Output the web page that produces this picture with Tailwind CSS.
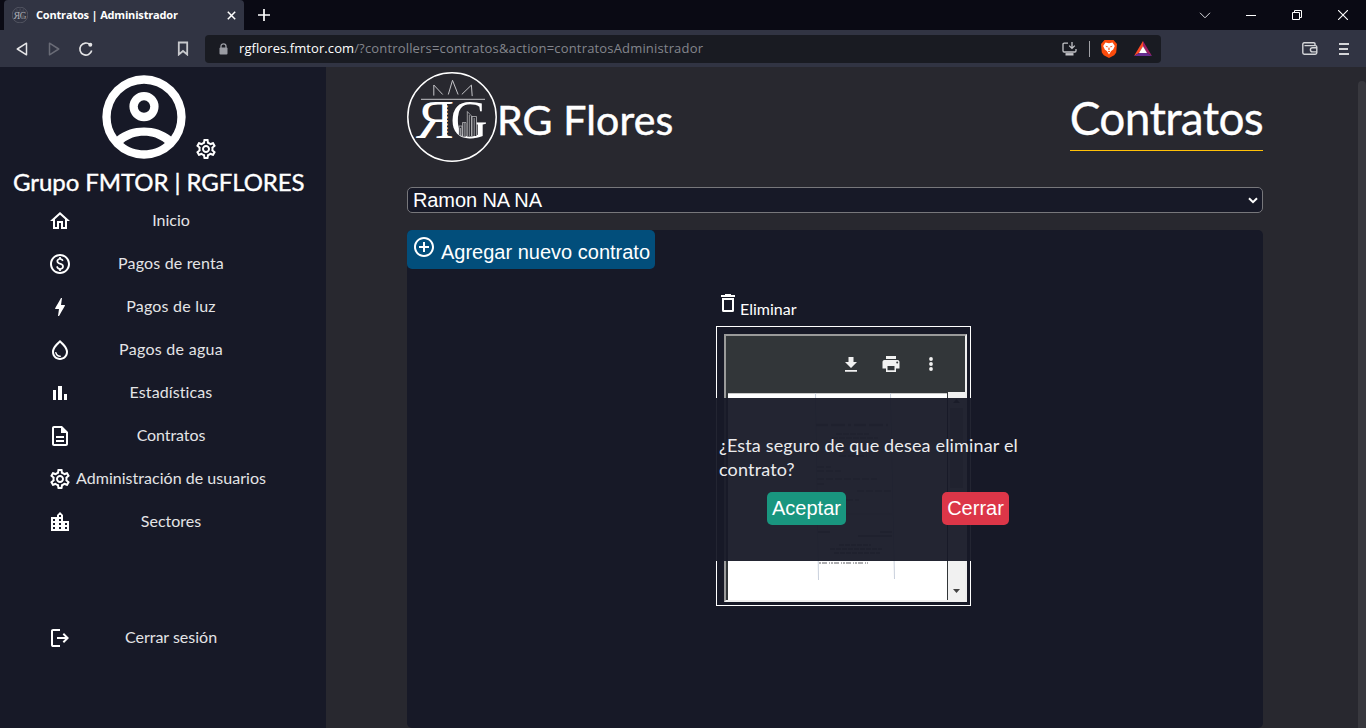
<!DOCTYPE html>
<html lang="es">
<head>
<meta charset="utf-8">
<title>Contratos | Administrador</title>
<script src="https://cdn.jsdelivr.net/npm/@tailwindcss/browser@4"></script>
</head>
<body class="h-[728px] w-[1366px] overflow-hidden bg-[#28282f] font-['Lato',sans-serif] text-white">
<svg class="hidden">
  <symbol id="cog" viewBox="0 0 24 24"><path d="M19.43 12.98c.04-.32.07-.64.07-.98 0-.34-.03-.66-.07-.98l2.11-1.65c.19-.15.24-.42.12-.64l-2-3.46c-.09-.16-.26-.25-.44-.25-.06 0-.12.01-.17.03l-2.49 1c-.52-.4-1.08-.73-1.69-.98l-.38-2.65C14.46 2.18 14.25 2 14 2h-4c-.25 0-.46.18-.49.42l-.38 2.65c-.61.25-1.17.59-1.69.98l-2.49-1c-.06-.02-.12-.03-.18-.03-.17 0-.34.09-.43.25l-2 3.46c-.13.22-.07.49.12.64l2.11 1.65c-.04.32-.07.65-.07.98 0 .33.03.66.07.98l-2.11 1.65c-.19.15-.24.42-.12.64l2 3.46c.09.16.26.25.44.25.06 0 .12-.01.17-.03l2.49-1c.52.4 1.08.73 1.69.98l.38 2.65c.03.24.24.42.49.42h4c.25 0 .46-.18.49-.42l.38-2.65c.61-.25 1.17-.59 1.69-.98l2.49 1c.06.02.12.03.18.03.17 0 .34-.09.43-.25l2-3.46c.12-.22.07-.49-.12-.64l-2.11-1.65zm-1.98-1.71c.04.31.05.52.05.73 0 .21-.02.43-.05.73l-.14 1.13.89.7 1.08.84-.7 1.21-1.27-.51-1.04-.42-.9.68c-.43.32-.84.56-1.25.73l-1.06.43-.16 1.13-.2 1.35h-1.4l-.19-1.35-.16-1.13-1.06-.43c-.43-.18-.83-.41-1.23-.71l-.91-.7-1.06.43-1.27.51-.7-1.21 1.08-.84.89-.7-.14-1.13c-.03-.31-.05-.54-.05-.74s.02-.43.05-.73l.14-1.13-.89-.7-1.08-.84.7-1.21 1.27.51 1.04.42.9-.68c.43-.32.84-.56 1.25-.73l1.06-.43.16-1.13.2-1.35h1.39l.19 1.35.16 1.13 1.06.43c.43.18.83.41 1.23.71l.91.7 1.06-.43 1.27-.51.7 1.21-1.07.85-.89.7.14 1.13zM12 8c-2.21 0-4 1.79-4 4s1.79 4 4 4 4-1.79 4-4-1.79-4-4-4zm0 6c-1.1 0-2-.9-2-2s.9-2 2-2 2 .9 2 2-.9 2-2 2z"/></symbol>
  <symbol id="logo" viewBox="0 0 90 90">
    <circle cx="45" cy="45" r="44.2" fill="none" stroke="#fff" stroke-width="1.5"/>
    <g fill="none" stroke="#c4c4c8" stroke-width="1">
      <path d="M26.800 23.600V13l8.900 9.500M41.300 22.500l4.200-14.200 5.600 14.200M54.800 22.400l9.600-9.300.8 11"/>
      <path d="M14 27.300h64"/>
    </g>
    <g font-family="Liberation Serif, serif" font-size="55" fill="#fff">
      <text transform="matrix(-1 0 0 1 47 65.8)" textLength="38" lengthAdjust="spacingAndGlyphs">R</text>
      <text x="43.500" y="65.800" textLength="37" lengthAdjust="spacingAndGlyphs">G</text>
    </g>
    <path d="M41 32v32" stroke="#28282f" stroke-width="2" stroke-dasharray="1.600 2"/>
    <g fill="#28282f" stroke="#c8c8cc" stroke-width=".7">
      <path d="M52 63V54h3v10M55.500 64.500V50.500H59v14M60.300 64.500V39.500l4.200 4.500v20M65 64V44.500h4.500V64"/>
      <path d="M57.200 51v13M62.300 43v21M53.500 56v8M67.200 46v18"/>
    </g>
  </symbol>
</svg>

<!-- Browser chrome -->
<header class="h-[67px] bg-[#313443] font-['Open_Sans',sans-serif]">
  <div class="flex h-[30px] items-center bg-[#0a0a14] pl-1">
    <div class="flex h-full w-60 items-center rounded-t-sm bg-[#313443] pl-2">
      <svg class="size-4 opacity-60"><use href="#logo"/></svg>
      <span class="ml-2 w-[191px] whitespace-nowrap text-[11px] font-bold tracking-[-0.18px]">Contratos | Administrador</span>
      <svg class="size-[9px]" viewBox="0 0 9 9" stroke="#fff" stroke-width="1.5"><path d="M.8.800l7.400 7.400M8.200.800L.8 8.200"/></svg>
    </div>
    <svg class="ml-[14px] size-3" viewBox="0 0 12 12" stroke="#fff" stroke-width="1.700"><path d="M6 0v12M0 6h12"/></svg>
    <div class="ml-auto flex items-center pr-[18px]">
      <svg class="h-[7px] w-3" viewBox="0 0 12 7" fill="none" stroke="#d8d8dc" stroke-width="1"><path d="M1 .800l5 5 5-5"/></svg>
      <svg class="ml-[35px] h-px w-[10px]"><path d="M0 .5h10" stroke="#fff"/></svg>
      <svg class="ml-9 size-[10px]" viewBox="0 0 10 10" fill="none" stroke="#fff"><path d="M.5 2.500h7v7h-7zM2.500 2.500v-2h7v7h-2"/></svg>
      <svg class="ml-9 size-[10px]" viewBox="0 0 10 10" stroke="#fff" stroke-width="1.100"><path d="M0 0l10 10M10 0L0 10"/></svg>
    </div>
  </div>
  <div class="flex h-[37px] items-center">
    <svg class="ml-4 h-[14px] w-3" viewBox="0 0 12 14" fill="none" stroke="#e4e4e6" stroke-width="1.500" stroke-linejoin="round"><path d="M10.500 1.200L1.300 7l9.200 5.800z"/></svg>
    <svg class="ml-5 h-[14px] w-3" viewBox="0 0 12 14" fill="none" stroke="#696b76" stroke-width="1.500" stroke-linejoin="round"><path d="M1.500 1.200L10.700 7l-9.200 5.800z"/></svg>
    <svg class="ml-[18px] size-4" viewBox="0 0 16 16" fill="none" stroke="#e4e4e6" stroke-width="1.600"><path d="M13.700 9.500A6 6 0 1 1 12 3.700"/><circle cx="12.300" cy="3.800" r="2" fill="#e4e4e6" stroke="none"/></svg>
    <svg class="ml-[83px] h-[15px] w-3" viewBox="0 0 12 15" fill="none" stroke="#c8c9cd" stroke-width="1.800"><path d="M1.800 1.500h8.400v12L6 10l-4.200 3.500z"/></svg>
    <div class="ml-4 flex h-7 w-[956px] items-center rounded bg-[#191b22]">
      <svg class="ml-[14px] h-3 w-[9px]" viewBox="0 0 9 12"><path d="M2 5V3.300a2.500 2.500 0 0 1 5 0V5" fill="none" stroke="#9a9ca3" stroke-width="1.300"/><rect x=".5" y="4.500" width="8" height="7" rx="1" fill="#9a9ca3"/></svg>
      <p class="ml-[11px] whitespace-nowrap text-[13px] tracking-[0.08px]">rgflores.fmtor.com<span class="tracking-[0.17px] text-[#84868d]">/?controllers=contratos&amp;action=contratosAdministrador</span></p>
      <svg class="ml-auto h-[14px] w-[15px]" viewBox="0 0 15 14" fill="none" stroke="#c4c5c9" stroke-width="1.300"><path d="M6 1.200H2.200Q1 1.200 1 2.400v6.400Q1 10 2.200 10h10.600q1.200 0 1.200-1.200V7M10 0v6M7.200 3.600L10 6.400l2.800-2.800"/><path d="M3.500 12.300h8" stroke-width="2.400"/></svg>
      <i class="ml-3 h-4 w-px bg-[#a0a1a6]"></i>
      <svg class="ml-[11px] h-[18px] w-4" viewBox="0 0 16 18"><path d="M3.500 0h9l1.500 1.800L16 4l-.8 8.500-2 2.700L8 18l-5.200-2.800-2-2.700L0 4l2-2.200z" fill="#fa4b0c"/><path d="M4.500 2.600L8 3.200l3.500-.6L13.800 6l-1.600 3.600-2 1.400L8 14.500 5.800 11l-2-1.400L2.200 6z" fill="#fff"/><path d="M4.200 5.700l2.600.6-.6 1.300zM11.800 5.700l-2.600.6.6 1.300zM7.600 7.500h.8l.4 2L8 10l-.8-.5zM6.700 11.300L8 10.700l1.300.6L8 12.300z" fill="#fa4b0c"/></svg>
      <svg class="ml-[17px] h-[15px] w-[18px]" viewBox="0 0 18 15"><path d="M9 0v5.500L5 12l-5 3z" fill="#ff4a24"/><path d="M9 0l9 15-5-3-4-6.500z" fill="#9e1f63"/><path d="M0 15l5-3h8l5 3z" fill="#662d91"/><path d="M9 5.200l4 6.900H5z" fill="#fff"/></svg>
      <i class="w-[9px]"></i>
    </div>
    <svg class="ml-[141px] h-[13px] w-4" viewBox="0 0 16 13" fill="none" stroke="#d4d5d8" stroke-width="1.400"><path d="M13 3.500V2Q13 .8 11.800.8H2.200Q.8.800.8 2.200v8.600Q.8 12.200 2.200 12.200h11q1.600 0 1.600-1.400V5Q14.800 3.600 13.400 3.600H2.500M15 5.700h-4.500a2.100 2.100 0 0 0 0 4.200H15"/></svg>
    <svg class="ml-[21px] h-3 w-[10px]" viewBox="0 0 10 12" stroke="#d4d5d8" stroke-width="2"><path d="M0 1h10M0 6h9M0 11h10"/></svg>
  </div>
</header>

<div class="flex h-[661px]">
  <!-- Sidebar -->
  <aside class="w-[326px] shrink-0 bg-[#171927]">
    <div class="flex h-[100px] items-end pl-[94px]">
      <svg class="size-[100px]" viewBox="0 0 24 24" fill="#fff"><path fill-rule="evenodd" d="M12 2a10 10 0 1 0 0 20 10 10 0 0 0 0-20zM7 18.250C8.300 17.100 10.100 16.500 12 16.500s3.700.6 5 1.750C15.600 19.400 13.900 20 12 20s-3.600-.6-5-1.750zM18.500 16.650C16.800 15.300 14.500 14.500 12 14.500s-4.800.8-6.500 2.150C4.500 15.300 4 13.800 4 12a8 8 0 0 1 16 0c0 1.800-.5 3.300-1.500 4.650z"/><circle cx="12" cy="9.500" r="2.500" fill="none" stroke="#fff" stroke-width="2"/></svg>
      <svg class="mb-[6px] size-6 fill-white"><use href="#cog"/></svg>
    </div>
    <h2 class="h-8 whitespace-nowrap pl-[13px] text-2xl leading-[30px] tracking-[-0.07px] [-webkit-text-stroke:0.4px_white]">Grupo FMTOR | RGFLORES</h2>
    <nav class="text-base text-[#e4e4e6]">
      <a class="flex h-[43px] items-center gap-1 pl-12"><svg class="size-6 fill-white" viewBox="0 0 24 24"><path d="M12 5.690l5 4.500V18h-2v-6H9v6H7v-7.810l5-4.500M12 3L2 12h3v8h6v-6h2v6h6v-8h3L12 3z"/></svg><span class="w-[190px] pb-[2px] text-center">Inicio</span></a>
      <a class="flex h-[43px] items-center gap-1 pl-12"><svg class="size-6 fill-white" viewBox="0 0 24 24"><path d="M12 2C6.480 2 2 6.480 2 12s4.480 10 10 10 10-4.480 10-10S17.520 2 12 2zm0 18c-4.410 0-8-3.590-8-8s3.590-8 8-8 8 3.590 8 8-3.590 8-8 8zm.89-8.900c-1.780-.59-2.640-.96-2.640-1.900 0-1.020 1.110-1.390 1.810-1.390 1.310 0 1.790.99 1.900 1.340l1.580-.67c-.15-.44-.82-1.910-2.660-2.230V5h-1.750v1.260c-2.600.56-2.620 2.850-2.620 2.960 0 2.270 2.250 2.910 3.350 3.310 1.580.56 2.280 1.070 2.280 2.030 0 1.130-1.050 1.610-1.980 1.610-1.820 0-2.340-1.870-2.400-2.090l-1.660.67c.63 2.190 2.280 2.780 3.020 2.960V19h1.750v-1.240c.52-.09 3.020-.59 3.020-3.220.01-1.390-.6-2.610-3-3.440z"/></svg><span class="w-[190px] pb-[2px] text-center tracking-[0.17px]">Pagos de renta</span></a>
      <a class="flex h-[43px] items-center gap-1 pl-12"><svg class="size-6 fill-white" viewBox="0 0 24 24"><path d="M11 21h-1l1-7H7.500c-.58 0-.57-.32-.38-.66.19-.34.05-.08.07-.12C8.480 10.940 10.420 7.540 13 3h1l-1 7h3.500c.49 0 .56.33.47.51l-.07.15C12.960 17.550 11 21 11 21z"/></svg><span class="w-[190px] pb-[2px] text-center tracking-[0.22px]">Pagos de luz</span></a>
      <a class="flex h-[43px] items-center gap-1 pl-12"><svg class="size-6 fill-white" viewBox="0 0 24 24"><path d="M12 2c-5.330 4.550-8 8.480-8 11.800 0 4.980 3.800 8.200 8 8.200s8-3.220 8-8.200c0-3.320-2.670-7.250-8-11.800zm0 18c-3.350 0-6-2.570-6-6.200 0-2.340 1.950-5.440 6-9.140 4.050 3.700 6 6.790 6 9.140 0 3.630-2.650 6.200-6 6.200zm-4.170-6c.37 0 .67.26.74.62.41 2.220 2.280 2.980 3.640 2.870.43-.02.79.32.79.75 0 .4-.32.73-.72.75-2.130.13-4.620-1.090-5.190-4.120-.08-.45.28-.87.74-.87z"/></svg><span class="w-[190px] pb-[2px] text-center tracking-[0.28px]">Pagos de agua</span></a>
      <a class="flex h-[43px] items-center gap-1 pl-12"><svg class="size-6 fill-white" viewBox="0 0 24 24"><path d="M5 9h3v10H5zM10 5h4v14h-4zM16 13h3v6h-3z"/></svg><span class="w-[190px] pb-[2px] text-center tracking-[0.1px]">Estadísticas</span></a>
      <a class="flex h-[43px] items-center gap-1 pl-12"><svg class="size-6 fill-white" viewBox="0 0 24 24"><path d="M8 16h8v2H8zm0-4h8v2H8zm6-10H6c-1.100 0-2 .9-2 2v16c0 1.100.89 2 1.990 2H18c1.100 0 2-.9 2-2V8l-6-6zm4 18H6V4h7v5h5v11z"/></svg><span class="w-[190px] pb-[2px] text-center tracking-[-0.08px]">Contratos</span></a>
      <a class="flex h-[43px] items-center gap-1 pl-12"><svg class="size-6 fill-white"><use href="#cog"/></svg><span class="w-[190px] whitespace-nowrap pb-[2px] text-center tracking-[0.03px]">Administración de usuarios</span></a>
      <a class="flex h-[43px] items-center gap-1 pl-12"><svg class="size-6 fill-white" viewBox="0 0 24 24"><path d="M15 11V5l-3-3-3 3v2H3v14h18V11h-6zm-8 8H5v-2h2v2zm0-4H5v-2h2v2zm0-4H5V9h2v2zm6 8h-2v-2h2v2zm0-4h-2v-2h2v2zm0-4h-2V9h2v2zm0-4h-2V5h2v2zm6 12h-2v-2h2v2zm0-4h-2v-2h2v2z"/></svg><span class="w-[190px] pb-[2px] text-center">Sectores</span></a>
      <a class="mt-[73px] flex h-[43px] items-center gap-1 pl-12"><svg class="size-6 fill-white" viewBox="0 0 24 24"><path d="M5 21q-.825 0-1.413-.588T3 19V5q0-.825.588-1.413T5 3h7v2H5v14h7v2Zm11-4-1.375-1.450 2.550-2.550H9v-2h8.175l-2.550-2.550L16 7l5 5Z"/></svg><span class="w-[190px] pb-[2px] text-center">Cerrar sesión</span></a>
    </nav>
  </aside>

  <!-- Content -->
  <main class="flex w-[1032px] flex-col pl-[81px] pt-[5px]">
    <div class="flex h-[90px] w-[856px]">
      <svg class="size-[90px]"><use href="#logo"/></svg>
      <h1 class="mt-5 text-[41px] leading-[56px] tracking-[0.15px] [-webkit-text-stroke:0.5px_white]">RG Flores</h1>
      <h1 class="ml-auto mt-[14px] h-[65px] border-b border-[#ffc107] text-[46px] leading-[64px] tracking-[-0.7px] [-webkit-text-stroke:0.3px_white]">Contratos</h1>
    </div>
    <div class="mt-[25px] flex h-[26px] w-[856px] items-center rounded-[5px] border border-[#77777b] bg-[#171927] pl-[5px] pr-[4px] font-['Liberation_Sans',sans-serif] text-xl tracking-[-0.1px]">
      Ramon NA NA
      <svg class="ml-auto h-[7px] w-[10px]" viewBox="0 0 10 7" fill="none" stroke="#fff" stroke-width="2"><path d="M1 1.200l4 4 4-4"/></svg>
    </div>
    <section class="mt-[17px] h-[498px] w-[856px] rounded-[5px] bg-[#171927]">
      <button class="flex h-[39px] w-[248px] whitespace-nowrap rounded-[5px] bg-[#024e7b] pl-[5px] pt-[5px] font-['Liberation_Sans',sans-serif] text-xl">
        <svg class="size-6 fill-white" viewBox="0 0 24 24"><path d="M13 7h-2v4H7v2h4v4h2v-4h4v-2h-4V7zm-1-5C6.480 2 2 6.480 2 12s4.480 10 10 10 10-4.480 10-10S17.520 2 12 2zm0 18c-4.410 0-8-3.590-8-8s3.590-8 8-8 8 3.590 8 8-3.590 8-8 8z"/></svg>
        <span class="ml-[5px] mt-[3px] leading-7">Agregar nuevo contrato</span>
      </button>
      <div class="ml-[309px] mt-[22px] flex h-[35px] w-[255px]">
        <svg class="size-6 fill-white" viewBox="0 0 24 24"><path d="M5 4h4V3h6v1h4v2H5zM6 7h12v12.500q0 1.500-1.500 1.500h-9Q6 21 6 19.500zM8 9v10h8V9z" fill-rule="evenodd"/></svg>
        <span class="mt-[6px] text-base leading-6">Eliminar</span>
      </div>
      <div class="relative ml-[309px] h-[280px] w-[255px] border border-white p-[7px]">
        <div class="h-[268px] w-[243px] overflow-hidden border-2 border-b-[#eeeeee] border-l-[#9a9a9a] border-r-[#eeeeee] border-t-[#9a9a9a] bg-[#323639]">
          <div class="flex h-14 items-center gap-4 pl-[113px]">
            <svg class="size-6 fill-[#f1f1f1]" viewBox="0 0 24 24"><path d="M18 10h-3.500V5h-5v5H6l6 6zM6 18v1.700h12V18z"/></svg>
            <svg class="size-6 fill-[#f1f1f1]" viewBox="0 0 24 24"><path d="M7 4h10v3H7zM18.500 8h-13C4.300 8 3.500 8.900 3.500 10v6.500H7V20h10v-3.500h3.500V10c0-1.100-.9-2-2-2zM15.500 18.300h-7V14h7zm2.700-6.800a1 1 0 1 1 0-2 1 1 0 0 1 0 2z" fill-rule="evenodd"/></svg>
            <svg class="size-6 fill-[#f1f1f1]" viewBox="0 0 24 24"><circle cx="12" cy="7" r="1.900"/><circle cx="12" cy="12" r="1.900"/><circle cx="12" cy="17" r="1.900"/></svg>
          </div>
          <div class="flex h-[208px]">
            <svg class="ml-[2px] mt-px h-[207px] w-[219px] bg-white" viewBox="0 0 219 207">
              <path d="M0 .5h219" stroke="#c8c8c8"/>
              <g stroke="#c9d0dc" stroke-width="1" fill="none"><path d="M87.500 0L90.500 187M162.500 0L166.500 186"/></g>
              <g stroke="#9a9a9e" stroke-width="2.500" fill="none" opacity=".8">
                <path d="M88 32h72" stroke-dasharray="12 3 14 3 3 3"/><path d="M108 41h33M104 45h46" stroke-width="1.500" stroke-dasharray="6 1"/>
                <path d="M111 63h28M89 74h14M89 78h24M89 86h60M89 91h8M129 98h34M91 107h40" stroke-width="1.500" stroke-dasharray="7 2"/>
                <path d="M90 121h74" stroke-width=".6"/><path d="M90 139h12M152 139h12M130 143h34" stroke-width="2"/>
                <path d="M111 152h32M102 156h52M106 160h46" stroke-width="2" stroke-dasharray="5 1"/>
                <path d="M91 170h49" stroke-width="2" stroke-dasharray="2 1 5 2 1 1"/>
              </g>
            </svg>
            <div class="ml-px flex w-[17px] flex-col items-center justify-between bg-[#f1f1f1] py-[7px]">
              <svg class="h-1 w-[7px]" viewBox="0 0 7 4"><path d="M0 4h7L3.500 0z" fill="#555"/></svg>
              <i class="mb-auto mt-[5px] h-[80px] w-[13px] bg-[#c1c1c1]"></i>
              <svg class="h-1 w-[7px]" viewBox="0 0 7 4"><path d="M0 0h7L3.500 4z" fill="#444"/></svg>
            </div>
          </div>
        </div>
        <!-- Confirmation dialog over the document -->
        <div class="absolute -left-8 top-[71px] h-[163px] w-[407px] bg-[#171927]/95 pl-[34px] pt-[35px]">
          <p class="w-[310px] text-lg leading-6 tracking-[0.16px] text-[#ececee]">¿Esta seguro de que desea eliminar el contrato?</p>
          <div class="mt-[11px] flex gap-24 pl-12 font-['Liberation_Sans',sans-serif] text-xl">
            <button class="h-[33px] w-[79px] rounded-[5px] bg-[#19967f] pb-[2px]">Aceptar</button>
            <button class="h-[33px] w-[67px] rounded-[5px] bg-[#dc3648] pb-[2px]">Cerrar</button>
          </div>
        </div>
      </div>
    </section>
  </main>
  <div class="mt-[14px] w-2 rounded-t bg-[#38383e]"></div>
</div>
</body>
</html>
